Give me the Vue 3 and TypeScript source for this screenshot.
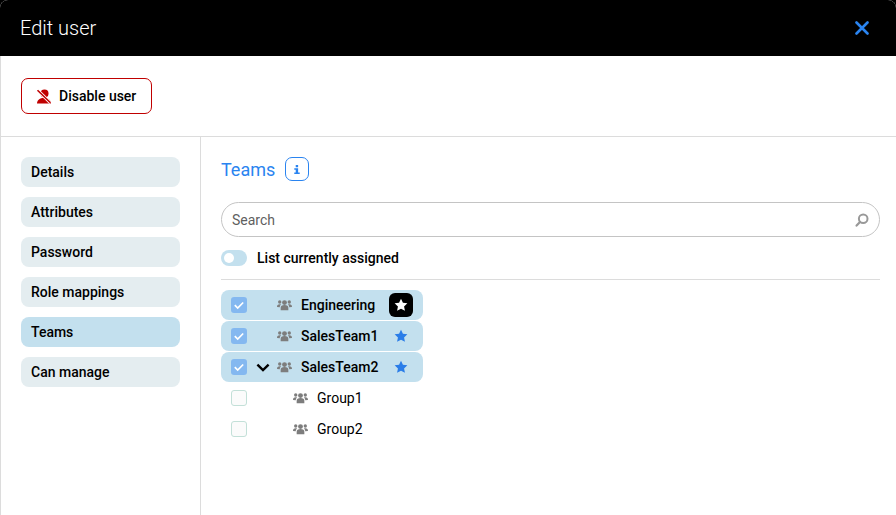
<script setup lang="ts">
interface TeamRow {
  name: string;
  checked: boolean;
  expanded?: boolean;
  child?: boolean;
  starState?: 'hover' | 'on';
}

const tabs = ['Details', 'Attributes', 'Password', 'Role mappings', 'Teams', 'Can manage'];

const teams: TeamRow[] = [
  { name: 'Engineering', checked: true, starState: 'hover' },
  { name: 'SalesTeam1', checked: true, starState: 'on' },
  { name: 'SalesTeam2', checked: true, expanded: true, starState: 'on' },
  { name: 'Group1', checked: false, child: true },
  { name: 'Group2', checked: false, child: true },
];

const starPath = 'M8 .8l2.2 4.7 5.1.6-3.8 3.5 1 5.1L8 12.2l-4.500 2.500 1-5.100L.7 6.100l5.100-.6z';
</script>

<template>
  <div class="modal">
    <header class="modal-head">
      <h1>Edit user</h1>
      <svg class="close" viewBox="0 0 14 14" width="14" height="14" aria-hidden="true">
        <path d="M1.5 1.5l11 11M12.5 1.5l-11 11" fill="none" stroke="#2a84f0" stroke-width="2.6" stroke-linecap="round" />
      </svg>
    </header>

    <div class="toolbar">
      <button class="disable-btn">
        <svg viewBox="0 0 16 16" width="16" height="16" aria-hidden="true">
          <circle cx="8.500" cy="5.600" r="4" fill="#c00000" />
          <path d="M1 15.500c0-3.600 2.800-5.600 7-5.600s7 2 7 5.600z" fill="#c00000" />
          <path d="M1.500 2.200l13 12.600" stroke="#fff" stroke-width="3.200" />
          <path d="M1.500 2.200l13 12.600" stroke="#c00000" stroke-width="1.600" />
        </svg>
        Disable user
      </button>
    </div>

    <div class="body">
      <nav class="side">
        <a v-for="tab in tabs" :key="tab" :class="['tab', { active: tab === 'Teams' }]">{{ tab }}</a>
      </nav>

      <main class="content">
        <div class="title-row">
          <h2>Teams</h2>
          <span class="info">
            <svg viewBox="0 0 10 12" width="8" height="11" aria-hidden="true">
              <path d="M3.4 0.4h3v2.700h-3zM1.600 4.300h4.800v5.400H8.400v2H1.600v-2h1.800V6.300H1.600z" fill="#2a84f0" />
            </svg>
          </span>
        </div>

        <div class="search">
          <span>Search</span>
          <svg viewBox="0 0 14 14" width="14" height="14" aria-hidden="true">
            <circle cx="8.200" cy="5.800" r="4.300" fill="none" stroke="#999" stroke-width="2" />
            <path d="M5 9l-3.400 3.600" stroke="#999" stroke-width="2.200" stroke-linecap="round" />
          </svg>
        </div>

        <div class="toggle-row">
          <span class="toggle"><i /></span>
          <span>List currently assigned</span>
        </div>

        <div class="team-list">
          <div v-for="team in teams" :key="team.name" :class="['team', { selected: team.checked, child: team.child }]">
            <span :class="['check', { on: team.checked }]">
              <svg v-if="team.checked" viewBox="0 0 16 16" width="16" height="16" aria-hidden="true">
                <path d="M3.800 8.200l2.900 2.900 5.500-5.600" fill="none" stroke="#fff" stroke-width="1.700" />
              </svg>
            </span>
            <span class="chevron">
              <svg v-if="team.expanded" viewBox="0 0 14 9" width="14" height="9" aria-hidden="true">
                <path d="M1.400 1.600L7 7l5.600-5.400" fill="none" stroke="#000" stroke-width="2.400" />
              </svg>
            </span>
            <svg class="group-icon" viewBox="0 0 16 12" width="15" height="12" aria-hidden="true">
              <circle cx="8" cy="3.400" r="2.600" fill="#7d7d7d" />
              <circle cx="2.900" cy="2.800" r="1.800" fill="#7d7d7d" />
              <circle cx="13.100" cy="2.800" r="1.800" fill="#7d7d7d" />
              <path d="M3.900 11.600V9c0-2 1.400-3 4.100-3s4.100 1 4.100 3v2.600z" fill="#7d7d7d" />
              <path d="M0 8.200c0-2 .8-3 2.900-3 .6 0 1.100.1 1.500.3C3.400 6.200 3 7.100 3 8.400z" fill="#7d7d7d" />
              <path d="M16 8.200c0-2-.8-3-2.900-3-.6 0-1.100.1-1.500.3 1 .7 1.400 1.600 1.400 2.900z" fill="#7d7d7d" />
            </svg>
            <span class="team-name">{{ team.name }}</span>
            <span v-if="team.starState" :class="['star', team.starState]">
              <svg viewBox="0 0 16 16" width="14" height="14" aria-hidden="true">
                <path :d="starPath" :fill="team.starState === 'hover' ? '#fff' : '#2a7de8'" />
              </svg>
            </span>
          </div>
        </div>
      </main>
    </div>
  </div>
</template>

<style>
html,
body {
  margin: 0;
  background: #000;
}
</style>

<style scoped>
.modal {
  width: 896px;
  height: 515px;
  overflow: hidden;
  display: flex;
  flex-direction: column;
  background: #fff;
  border-radius: 8px 8px 0 0;
  font-family: Roboto, "Liberation Sans", sans-serif;
  color: #000;
}

.modal-head {
  height: 56px;
  flex: none;
  background: #000;
  display: flex;
  align-items: center;
  justify-content: space-between;
  padding: 0 27px 0 20px;
}

.modal-head h1 {
  margin: 0;
  color: #fff;
  font-size: 20px;
  font-weight: 300;
}

.toolbar {
  height: 81px;
  flex: none;
  box-sizing: border-box;
  padding: 0 0 1px 20px;
  display: flex;
  align-items: center;
  border-left: 1px solid #dcdcdc;
  border-bottom: 1px solid #dcdcdc;
}

.disable-btn {
  width: 131px;
  height: 36px;
  display: flex;
  align-items: center;
  gap: 7px;
  padding: 0 0 0 14px;
  background: #fff;
  border: 1px solid #c00000;
  border-radius: 7px;
  font: 500 14px Roboto, "Liberation Sans", sans-serif;
  color: #000;
}

.body {
  flex: 1;
  display: flex;
  min-height: 0;
}

.side {
  width: 201px;
  flex: none;
  box-sizing: border-box;
  padding: 20px 20px 0;
  display: flex;
  flex-direction: column;
  gap: 10px;
  border-left: 1px solid #dcdcdc;
  border-right: 1px solid #dcdcdc;
}

.tab {
  height: 30px;
  line-height: 30px;
  padding-left: 10px;
  border-radius: 8px;
  background: #e4edf0;
  font-size: 14px;
  font-weight: 500;
}

.tab.active {
  background: #c3e0ee;
}

.content {
  flex: 1;
  min-width: 0;
  padding: 20px 16px 0 20px;
}

.title-row {
  height: 24px;
  display: flex;
  align-items: center;
  gap: 10px;
}

.title-row h2 {
  margin: 0;
  font-size: 18px;
  font-weight: 400;
  color: #2a84f0;
}

.info {
  width: 22px;
  height: 22px;
  display: flex;
  align-items: center;
  justify-content: center;
  border: 1px solid #2a84f0;
  border-radius: 7px;
}

.search {
  height: 35px;
  margin-top: 21px;
  box-sizing: border-box;
  display: flex;
  align-items: center;
  justify-content: space-between;
  padding: 0 10px;
  border: 1px solid #c4c4c4;
  border-radius: 18px;
  font-size: 14px;
  color: #5f5f5f;
}

.toggle-row {
  height: 17px;
  margin-top: 12px;
  display: flex;
  align-items: center;
  gap: 10px;
  font-size: 14px;
  font-weight: 500;
}

.toggle {
  width: 26px;
  height: 16px;
  box-sizing: border-box;
  padding: 3px;
  background: #c3e0ee;
  border-radius: 8px;
}

.toggle i {
  display: block;
  width: 10px;
  height: 10px;
  border-radius: 50%;
  background: #fff;
}

.team-list {
  margin-top: 13px;
  padding-top: 10px;
  display: flex;
  flex-direction: column;
  gap: 1px;
  border-top: 1px solid #dcdcdc;
}

.team {
  width: 202px;
  height: 30px;
  display: flex;
  align-items: center;
  box-sizing: border-box;
  padding-left: 10px;
  border-radius: 8px;
  font-size: 14px;
}

.team.selected {
  background: #c3e0ee;
  font-weight: 500;
}

.check {
  width: 16px;
  height: 16px;
  flex: none;
  box-sizing: border-box;
  border: 1px solid #c3e0d8;
  border-radius: 3px;
  background: #fbfbfb;
}

.check.on {
  border: 0;
  background: #84b8f0;
}

.check svg {
  display: block;
}

.chevron {
  width: 14px;
  height: 9px;
  flex: none;
  margin: 0 7px 0 9px;
}

.chevron svg {
  display: block;
}

.group-icon {
  flex: none;
  margin-right: 9px;
}

.team.child .group-icon {
  margin-left: 16px;
}

.team-name {
  flex: 1;
}

.star {
  width: 24px;
  height: 24px;
  flex: none;
  margin-right: 10px;
  display: flex;
  align-items: center;
  justify-content: center;
  border-radius: 6px;
}

.star.hover {
  background: #000;
}
</style>
